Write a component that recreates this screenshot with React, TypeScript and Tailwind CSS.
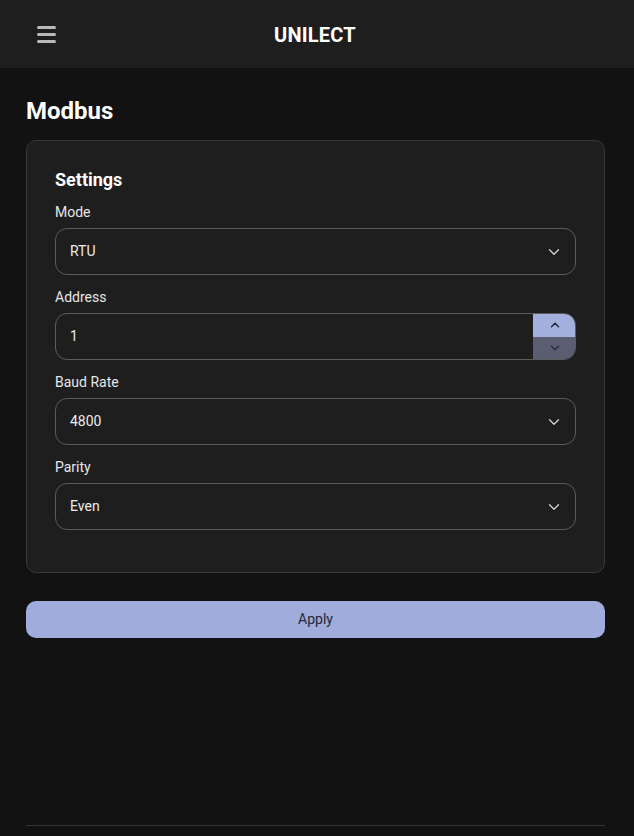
import { ChevronDown, ChevronUp } from "lucide-react";

function SelectField({ label, value }: { label: string; value: string }) {
  return (
    <div className="flex flex-col">
      <label className="text-[14px] leading-5 text-[#e6e6e6] mb-[6px]">{label}</label>
      <div className="h-[47px] flex items-center justify-between rounded-[12px] border border-[#5c5c5c] pl-[14px] pr-[12px] text-[14px] text-[#ececec]">
        <span>{value}</span>
        <ChevronDown size={18} strokeWidth={1.6} className="text-[#d8d8d8]" />
      </div>
    </div>
  );
}

function NumberField({ label, value }: { label: string; value: string }) {
  return (
    <div className="flex flex-col">
      <label className="text-[14px] leading-5 text-[#e6e6e6] mb-[6px]">{label}</label>
      <div className="h-[47px] flex rounded-[12px] border border-[#5c5c5c] overflow-hidden text-[14px] text-[#ececec]">
        <div className="flex-1 flex items-center pl-[14px]">{value}</div>
        <div className="w-[43px] flex flex-col -my-px -mr-px">
          <div className="flex-1 flex items-center justify-center bg-[#a3afdd] text-[#1c2038]">
            <ChevronUp size={14} strokeWidth={2.4} />
          </div>
          <div className="flex-1 flex items-center justify-center bg-[#5b5e70] text-[#262a3c]">
            <ChevronDown size={14} strokeWidth={2.4} />
          </div>
        </div>
      </div>
    </div>
  );
}

export default function App() {
  return (
    <div className="min-h-[836px] bg-[#121212] flex flex-col font-['Roboto',sans-serif]">
      <header className="h-[68px] bg-[#1e1e1e] flex items-center relative shrink-0">
        <div className="pl-[37px] flex flex-col gap-[4px]">
          <span className="block w-[19px] h-[3px] rounded-sm bg-[#b9b9b9]" />
          <span className="block w-[19px] h-[3px] rounded-sm bg-[#b9b9b9]" />
          <span className="block w-[19px] h-[3px] rounded-sm bg-[#b9b9b9]" />
        </div>
        <h1 className="absolute left-0 right-[4px] top-[23px] leading-6 text-center text-[20px] font-bold text-white tracking-[0.01em]">
          UNILECT
        </h1>
      </header>

      <main className="flex-1 flex flex-col pl-[26px] pr-[29px]">
        <h2 className="mt-[27px] text-[24px] leading-8 font-bold text-white">Modbus</h2>

        <section className="mt-[13px] rounded-[10px] border border-[#383838] bg-[#1e1e1e] px-[28px] pt-[27px] pb-[42px]">
          <h3 className="text-[18px] leading-6 font-bold text-white mb-[10px]">Settings</h3>
          <div className="flex flex-col gap-[12px]">
            <SelectField label="Mode" value="RTU" />
            <NumberField label="Address" value="1" />
            <SelectField label="Baud Rate" value="4800" />
            <SelectField label="Parity" value="Even" />
          </div>
        </section>

        <button className="mt-[28px] h-[37px] rounded-[10px] bg-[#a0acdb] text-[14px] text-[#23263a]">
          Apply
        </button>

        <div className="flex-1" />
        <div className="h-px bg-[#333333] mb-[10px]" />
      </main>
    </div>
  );
}
